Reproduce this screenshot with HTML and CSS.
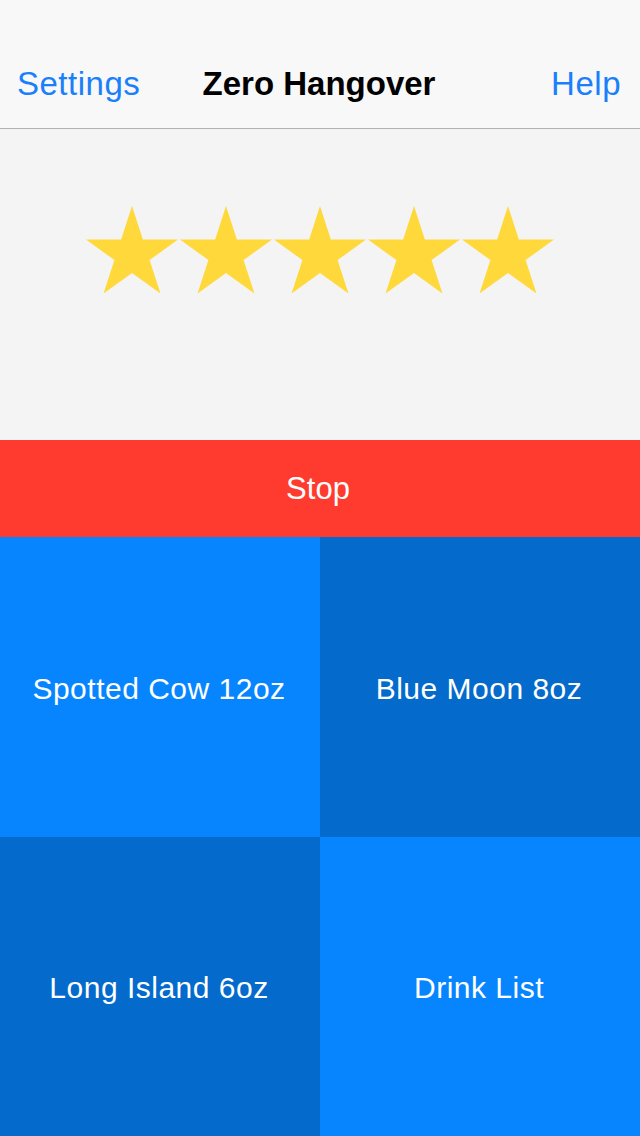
FILE: index.html
```html
<!DOCTYPE html>
<html>
<head>
<meta charset="utf-8">
<link rel="stylesheet" href="styles.css">
</head>
<body>
<div class="app">
  <header class="navbar">
    <span class="nav-link">Settings</span>
    <span class="nav-title">Zero Hangover</span>
    <span class="nav-link">Help</span>
  </header>
  <section class="rating">
    <div class="stars">
      <svg class="star" viewBox="0 0 94 88"><polygon points="47,0 57.87,33.44 93.03,33.44 64.59,54.11 75.45,87.56 47,66.89 18.55,87.56 29.41,54.11 0.97,33.44 36.13,33.44"/></svg>
      <svg class="star" viewBox="0 0 94 88"><polygon points="47,0 57.87,33.44 93.03,33.44 64.59,54.11 75.45,87.56 47,66.89 18.55,87.56 29.41,54.11 0.97,33.44 36.13,33.44"/></svg>
      <svg class="star" viewBox="0 0 94 88"><polygon points="47,0 57.87,33.44 93.03,33.44 64.59,54.11 75.45,87.56 47,66.89 18.55,87.56 29.41,54.11 0.97,33.44 36.13,33.44"/></svg>
      <svg class="star" viewBox="0 0 94 88"><polygon points="47,0 57.87,33.44 93.03,33.44 64.59,54.11 75.45,87.56 47,66.89 18.55,87.56 29.41,54.11 0.97,33.44 36.13,33.44"/></svg>
      <svg class="star" viewBox="0 0 94 88"><polygon points="47,0 57.87,33.44 93.03,33.44 64.59,54.11 75.45,87.56 47,66.89 18.55,87.56 29.41,54.11 0.97,33.44 36.13,33.44"/></svg>
    </div>
  </section>
  <div class="stop">Stop</div>
  <div class="grid">
    <div class="tile light">Spotted Cow 12oz</div>
    <div class="tile dark">Blue Moon 8oz</div>
    <div class="tile dark">Long Island 6oz</div>
    <div class="tile light">Drink List</div>
  </div>
</div>
</body>
</html>
```
FILE: styles.css
```css
* { box-sizing: border-box; }
html, body {
  margin: 0;
  padding: 0;
  width: 640px;
  height: 1136px;
  overflow: hidden;
  font-family: "Liberation Sans", Arial, sans-serif;
}
.app {
  display: flex;
  flex-direction: column;
  height: 1136px;
}
.navbar {
  height: 129px;
  padding: 40px 19px 0 17px;
  background: #f8f8f8;
  border-bottom: 1px solid #b2b2b2;
  display: flex;
  align-items: center;
  justify-content: space-between;
}
.nav-link {
  color: #1a7ffb;
  font-size: 33px;
  letter-spacing: 0.5px;
  width: 124px;
}
.nav-link:last-child { text-align: right; }
.nav-title {
  color: #000;
  font-size: 33px;
  font-weight: bold;
}
.rating {
  height: 311px;
  background: #f4f4f4;
  padding-top: 77px;
}
.stars {
  display: flex;
  justify-content: center;
}
.star {
  width: 94px;
  height: 88px;
  display: block;
}
.star polygon { fill: #ffd93b; }
.stop {
  height: 97px;
  background: #ff3b30;
  color: #fff;
  font-size: 31px;
  display: flex;
  align-items: center;
  justify-content: center;
  padding: 1px 4px 0 0;
}
.grid {
  flex: 1;
  display: grid;
  grid-template-columns: 320px 320px;
  grid-template-rows: 300px 299px;
}
.tile {
  color: #fff;
  font-size: 30px;
  letter-spacing: 0.5px;
  display: flex;
  align-items: center;
  justify-content: center;
  padding: 3px 2px 0 0;
}
.light { background: #0785ff; }
.dark { background: #046acc; }
```
